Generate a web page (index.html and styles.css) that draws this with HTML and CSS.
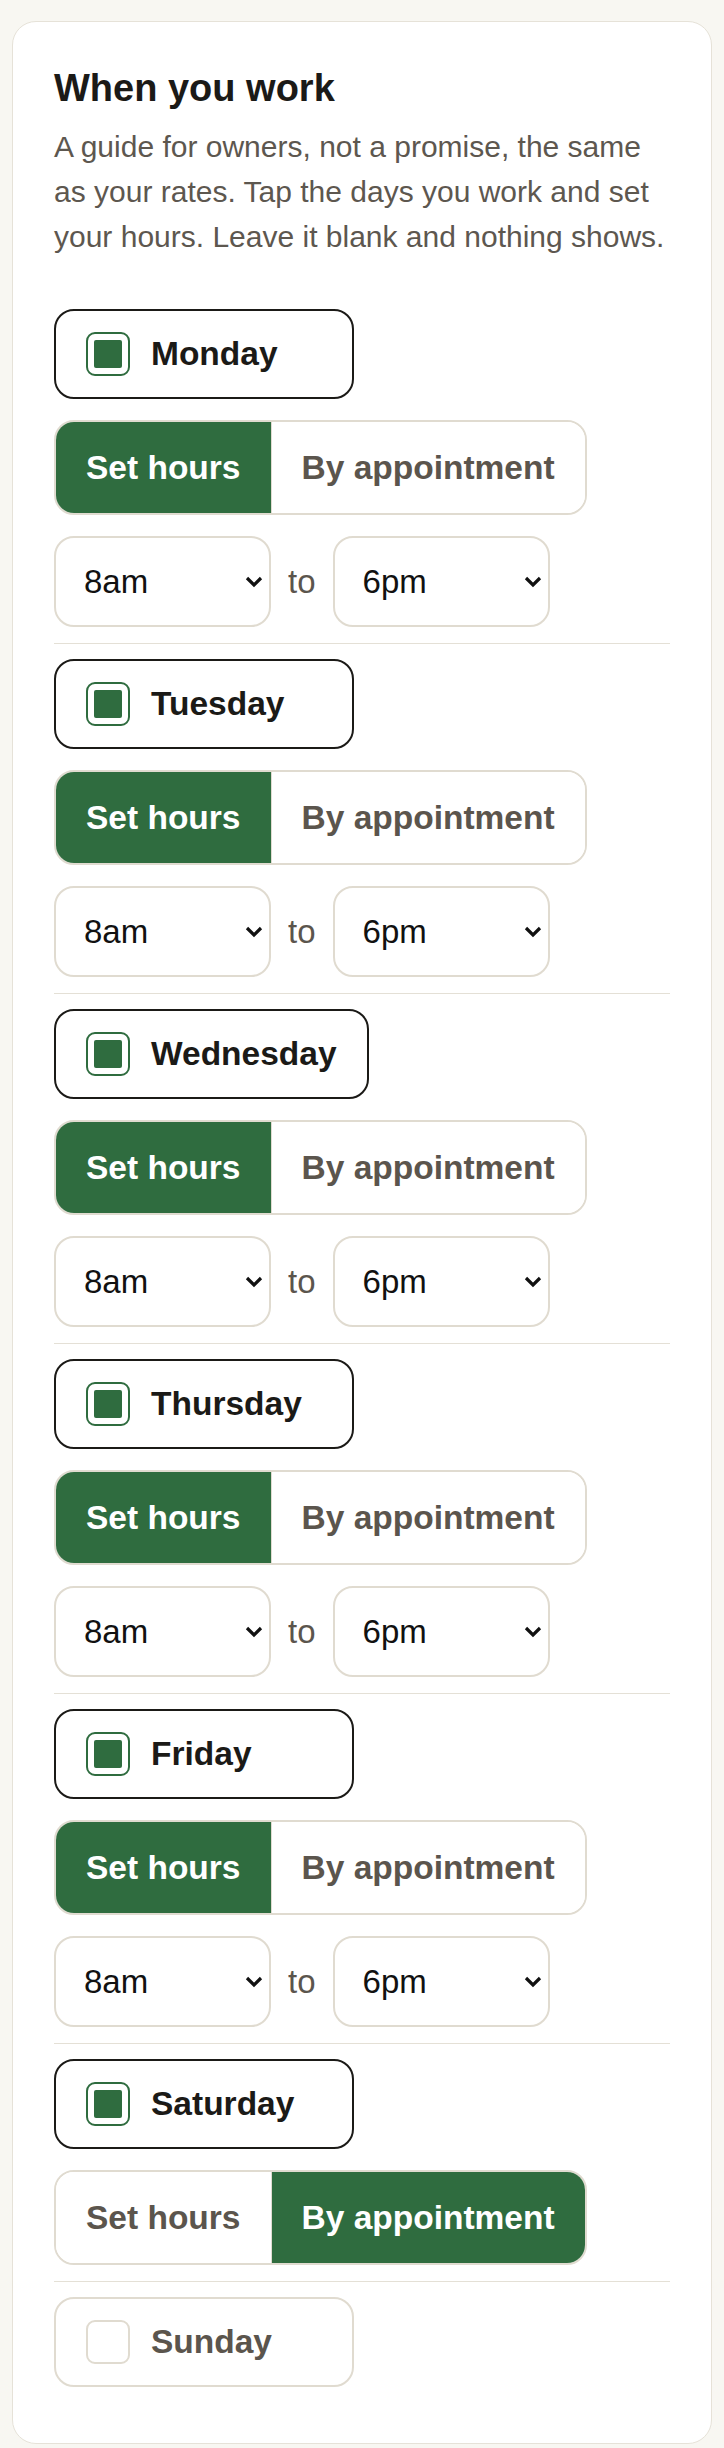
FILE: index.html
```html
<!DOCTYPE html>
<html lang="en">

<head>
    <meta charset="UTF-8">
    <meta name="viewport" content="width=device-width, initial-scale=1.0">
    <title>When you work</title>
    <link rel="stylesheet" href="styles.css">
</head>

<body>
    <div class="card">
        <h1>When you work</h1>
        <p class="intro">A guide for owners, not a promise, the same as your rates. Tap the days you work and set your hours. Leave it blank and nothing shows.</p>

        <div class="days">

            <div class="day">
                <label class="day-chip on"><span class="box"></span> Monday</label>
                <div class="segment">
                    <button class="active">Set hours</button>
                    <button>By appointment</button>
                </div>
                <div class="hours">
                    <div class="pick"><select><option>8am</option></select><svg class="chev" viewBox="0 0 18 12"><path d="M2 2 L9 9 L16 2" /></svg></div>
                    <span class="to">to</span>
                    <div class="pick"><select><option>6pm</option></select><svg class="chev" viewBox="0 0 18 12"><path d="M2 2 L9 9 L16 2" /></svg></div>
                </div>
            </div>

            <div class="day">
                <label class="day-chip on"><span class="box"></span> Tuesday</label>
                <div class="segment">
                    <button class="active">Set hours</button>
                    <button>By appointment</button>
                </div>
                <div class="hours">
                    <div class="pick"><select><option>8am</option></select><svg class="chev" viewBox="0 0 18 12"><path d="M2 2 L9 9 L16 2" /></svg></div>
                    <span class="to">to</span>
                    <div class="pick"><select><option>6pm</option></select><svg class="chev" viewBox="0 0 18 12"><path d="M2 2 L9 9 L16 2" /></svg></div>
                </div>
            </div>

            <div class="day">
                <label class="day-chip on"><span class="box"></span> Wednesday</label>
                <div class="segment">
                    <button class="active">Set hours</button>
                    <button>By appointment</button>
                </div>
                <div class="hours">
                    <div class="pick"><select><option>8am</option></select><svg class="chev" viewBox="0 0 18 12"><path d="M2 2 L9 9 L16 2" /></svg></div>
                    <span class="to">to</span>
                    <div class="pick"><select><option>6pm</option></select><svg class="chev" viewBox="0 0 18 12"><path d="M2 2 L9 9 L16 2" /></svg></div>
                </div>
            </div>

            <div class="day">
                <label class="day-chip on"><span class="box"></span> Thursday</label>
                <div class="segment">
                    <button class="active">Set hours</button>
                    <button>By appointment</button>
                </div>
                <div class="hours">
                    <div class="pick"><select><option>8am</option></select><svg class="chev" viewBox="0 0 18 12"><path d="M2 2 L9 9 L16 2" /></svg></div>
                    <span class="to">to</span>
                    <div class="pick"><select><option>6pm</option></select><svg class="chev" viewBox="0 0 18 12"><path d="M2 2 L9 9 L16 2" /></svg></div>
                </div>
            </div>

            <div class="day">
                <label class="day-chip on"><span class="box"></span> Friday</label>
                <div class="segment">
                    <button class="active">Set hours</button>
                    <button>By appointment</button>
                </div>
                <div class="hours">
                    <div class="pick"><select><option>8am</option></select><svg class="chev" viewBox="0 0 18 12"><path d="M2 2 L9 9 L16 2" /></svg></div>
                    <span class="to">to</span>
                    <div class="pick"><select><option>6pm</option></select><svg class="chev" viewBox="0 0 18 12"><path d="M2 2 L9 9 L16 2" /></svg></div>
                </div>
            </div>

            <div class="day">
                <label class="day-chip on"><span class="box"></span> Saturday</label>
                <div class="segment">
                    <button>Set hours</button>
                    <button class="active">By appointment</button>
                </div>
            </div>

            <div class="day">
                <label class="day-chip"><span class="box"></span> Sunday</label>
            </div>

        </div>
    </div>
</body>

</html>
```

FILE: styles.css
```css
body {
    margin: 0;
    padding: 21px 12px 0;
    background-color: #f8f7f2;
    font-family: "Liberation Sans", Arial, sans-serif;
    color: #1b1a17;
}

.card {
    background: white;
    border: 1.5px solid #e6e2d8;
    border-radius: 24px;
    padding: 40px 41px;
}

h1 {
    margin: 0;
    font-size: 38px;
    line-height: 52px;
    font-weight: bold;
}

.intro {
    margin: 10px 0 35px;
    font-size: 30px;
    line-height: 1.5;
    color: #5d574f;
}

.day {
    display: flex;
    flex-direction: column;
    align-items: flex-start;
    gap: 21px;
    padding: 15px 0 16px;
    border-bottom: 1.5px solid #e4e0d6;
}

.day:last-child {
    border-bottom: none;
}

.day-chip {
    display: inline-flex;
    align-items: center;
    gap: 21px;
    box-sizing: border-box;
    height: 90px;
    min-width: 300px;
    padding: 0 30px;
    border: 2px solid #e0dbd0;
    border-radius: 20px;
    font-size: 33.5px;
    font-weight: bold;
    color: #5b554d;
}

.day-chip.on {
    border-color: #1b1a17;
    color: #1b1a17;
}

.box {
    box-sizing: border-box;
    width: 44px;
    height: 44px;
    padding: 6px;
    border: 2px solid #e0dbd0;
    border-radius: 9px;
}

.day-chip.on .box {
    border-color: #2f6c3f;
}

.day-chip.on .box::before {
    content: "";
    display: block;
    width: 100%;
    height: 100%;
    background: #2f6c3f;
    border-radius: 2px;
}

.segment {
    display: flex;
    border: 2px solid #e0dbd0;
    border-radius: 20px;
    overflow: hidden;
}

.segment button {
    height: 91px;
    padding: 0 30px;
    border: none;
    background: white;
    font-family: inherit;
    font-size: 33.5px;
    font-weight: bold;
    color: #5b554d;
}

.segment button + button {
    border-left: 1.5px solid #e0dbd0;
}

.segment button.active {
    background: #2f6c3f;
    color: white;
}

.hours {
    display: flex;
    align-items: center;
    gap: 17px;
}

.pick {
    position: relative;
}

.pick select {
    display: block;
    box-sizing: border-box;
    width: 217px;
    height: 91px;
    padding: 0 40px 0 28px;
    border: 2px solid #e0dbd0;
    border-radius: 20px;
    background: white;
    font-family: inherit;
    font-size: 33px;
    color: #111;
    appearance: none;
}

.chev {
    position: absolute;
    right: 8px;
    top: 40px;
    width: 18px;
    height: 12px;
    fill: none;
    stroke: #111;
    stroke-width: 3.2;
    pointer-events: none;
}

.to {
    font-size: 33px;
    color: #5b554d;
}
```
